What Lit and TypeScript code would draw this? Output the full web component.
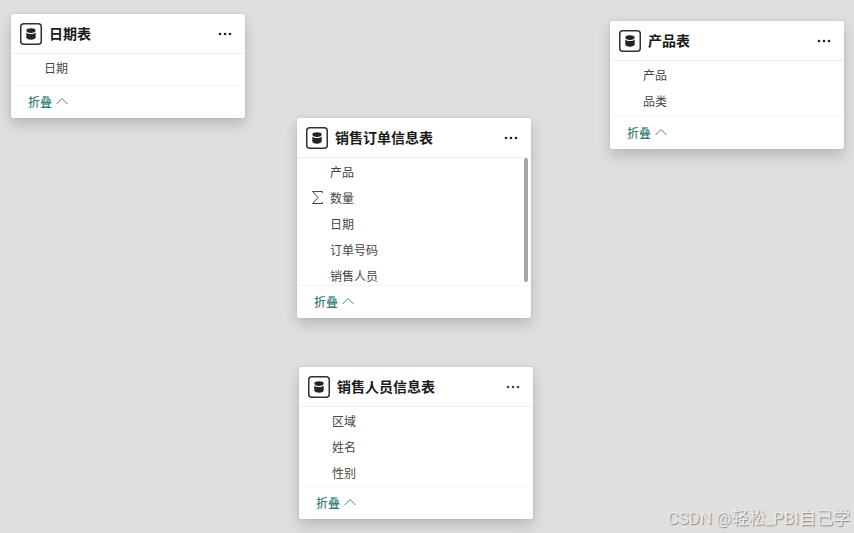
import { LitElement, html, css, svg, nothing } from "lit";
import { customElement, property } from "lit/decorators.js";

interface Field {
  name: string;
  numeric?: boolean;
}

interface TableNode {
  title: string;
  x: number;
  y: number;
  bodyHeight: number;
  scroll?: boolean;
  muted?: boolean;
  fields: Field[];
}

const TABLES: TableNode[] = [
  { title: "日期表", x: 11, y: 14, bodyHeight: 31, fields: [{ name: "日期" }] },
  {
    title: "产品表", x: 610, y: 21, bodyHeight: 55,
    fields: [{ name: "产品" }, { name: "品类" }],
  },
  {
    title: "销售订单信息表", x: 297, y: 118, bodyHeight: 127, scroll: true,
    fields: [
      { name: "产品" },
      { name: "数量", numeric: true },
      { name: "日期" },
      { name: "订单号码" },
      { name: "销售人员" },
    ],
  },
  {
    title: "销售人员信息表", x: 299, y: 367, bodyHeight: 79, muted: true,
    fields: [{ name: "区域" }, { name: "姓名" }, { name: "性别" }],
  },
];

const tableIcon = svg`
  <rect x="0.75" y="0.75" width="20.5" height="20.5" rx="3" fill="#fff" stroke="#323130" stroke-width="1.5"/>
  <ellipse cx="11" cy="7.600" rx="4.600" ry="2.300" fill="#252423"/>
  <path d="M6.300 9.600c1 1 2.700 1.500 4.700 1.500s3.700-.5 4.700-1.500v4.600c0 1.500-2.100 2.500-4.700 2.500s-4.700-1-4.700-2.500z" fill="#252423"/>`;

@customElement("table-card")
export class TableCard extends LitElement {
  @property({ attribute: false }) table!: TableNode;

  static styles = css`
    :host {
      display: block;
      background: #fff;
      border-radius: 2px;
      box-shadow: 0 6px 14px rgba(0, 0, 0, 0.18), 0 0 3px rgba(0, 0, 0, 0.08);
      color: #484644;
      font-size: 12px;
    }
    .header {
      display: flex;
      align-items: center;
      gap: 7px;
      box-sizing: border-box;
      height: 40px;
      padding: 0 12px 0 9px;
      border-bottom: 1px solid #f0efee;
    }
    .icon {
      flex: none;
      width: 22px;
      height: 22px;
    }
    .title {
      flex: 1;
      margin: 0;
      padding-bottom: 2px;
      color: #1b1a19;
      font-size: 14px;
      line-height: 20px;
      font-weight: 700;
      white-space: nowrap;
    }
    button {
      display: flex;
      align-items: center;
      margin: 0;
      padding: 0;
      border: 0;
      background: none;
      font: inherit;
      cursor: pointer;
    }
    .more {
      color: #252423;
    }
    .more.muted {
      color: #484644;
    }
    .body {
      display: flex;
      box-sizing: border-box;
      padding-right: 3px;
      overflow: hidden;
    }
    .fields {
      flex: 1;
      margin: 0;
      padding: 0;
      list-style: none;
    }
    .field {
      display: flex;
      align-items: center;
      height: 26px;
      padding-left: 14px;
    }
    .kind {
      flex: none;
      width: 19px;
      height: 14px;
    }
    .thumb {
      width: 4px;
      height: 124px;
      border-radius: 2px;
      background: #a6a6a6;
    }
    .footer {
      display: flex;
      box-sizing: border-box;
      height: 33px;
      padding: 0 17px 2px;
      border-top: 1px solid #f7f6f5;
    }
    .fold {
      gap: 4px;
      color: #0b6a5f;
    }
  `;

  render() {
    const t = this.table;
    return html`
      <header class="header">
        <svg class="icon" viewBox="0 0 22 22" aria-hidden="true">${tableIcon}</svg>
        <h2 class="title">${t.title}</h2>
        <button class="more ${t.muted ? "muted" : ""}" aria-label="更多选项">
          <svg width="16" height="16" viewBox="0 0 16 16" fill="currentColor">
            <circle cx="3" cy="8" r="1.300" /><circle cx="8" cy="8" r="1.300" /><circle cx="13" cy="8" r="1.300" />
          </svg>
        </button>
      </header>
      <div class="body" style="height:${t.bodyHeight}px">
        <ul class="fields">
          ${t.fields.map(
            (f) => html`<li class="field">
              <svg class="kind" viewBox="0 0 19 14" aria-hidden="true">
                ${f.numeric
                  ? svg`<path d="M11.500 3V1.500H1.500L7 7.500 1.500 13.500h10V12" fill="none" stroke="#484644" stroke-width="1"/>`
                  : nothing}
              </svg>
              <span>${f.name}</span>
            </li>`
          )}
        </ul>
        ${t.scroll ? html`<div class="thumb"></div>` : nothing}
      </div>
      <footer class="footer">
        <button class="fold">
          <span>折叠</span>
          <svg width="12" height="8" viewBox="0 0 12 8" fill="none" stroke="#4f7f80" aria-hidden="true">
            <path d="M0.500 7 6 1.500 11.500 7" />
          </svg>
        </button>
      </footer>
    `;
  }
}

@customElement("app-root")
export class AppRoot extends LitElement {
  static styles = css`
    :host {
      display: block;
      position: relative;
      min-height: 100vh;
      overflow: hidden;
      background: #e0dfde;
      font-family: "Noto Sans CJK SC", sans-serif;
    }
    .node {
      position: absolute;
      width: 234px;
    }
    .credit {
      position: absolute;
      right: 4px;
      bottom: 3px;
      color: #ebeae9;
      font-family: Roboto, "Noto Sans CJK SC", sans-serif;
      font-size: 17px;
      font-weight: 400;
      line-height: 24px;
      text-shadow: 1px 1px 1px #8a8886;
      white-space: nowrap;
    }
  `;

  render() {
    return html`
      ${TABLES.map(
        (t) => html`<table-card class="node" style="left:${t.x}px;top:${t.y}px" .table=${t}></table-card>`
      )}
      <div class="credit">CSDN @轻松_PBI自己学</div>
    `;
  }
}
